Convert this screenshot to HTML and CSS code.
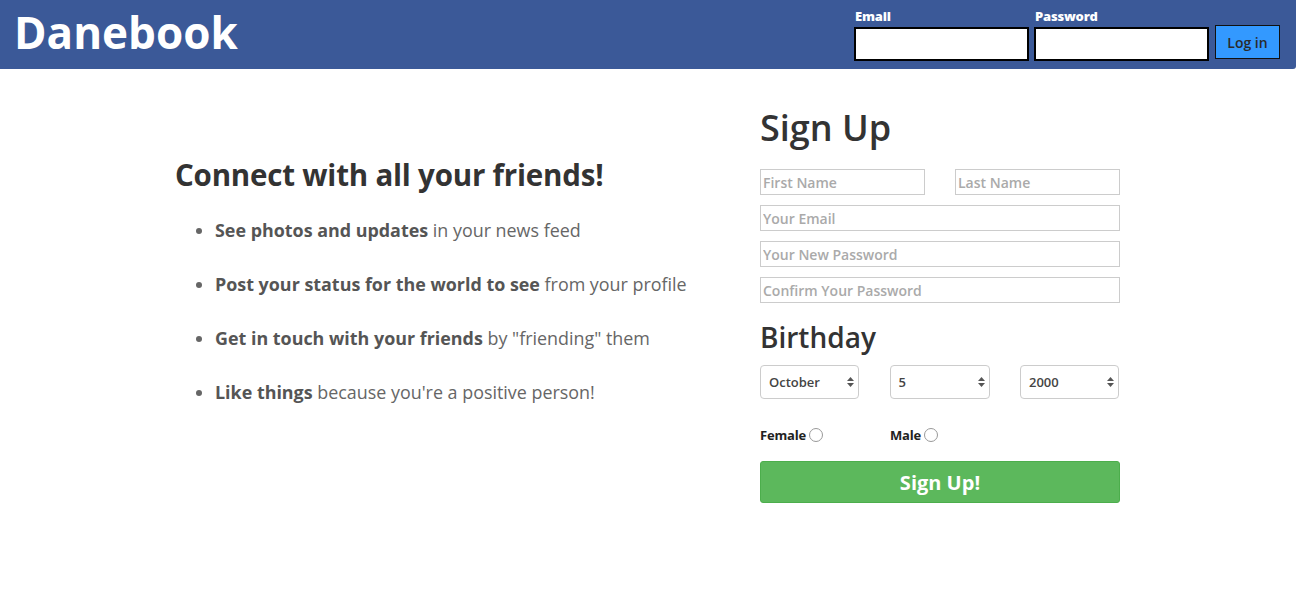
FILE: index.html
```html
<!DOCTYPE html>
<html>
<head>
<meta charset="utf-8">
<link rel="stylesheet" href="styles.css">
</head>
<body>
<header class="topbar">
  <div class="brand">Danebook</div>
  <form class="login">
    <div class="field">
      <label class="login-label">Email</label>
      <input class="login-input" type="text">
    </div>
    <div class="field">
      <label class="login-label">Password</label>
      <input class="login-input" type="password">
    </div>
    <button type="button" class="login-btn">Log in</button>
  </form>
</header>
<main class="main">
  <section class="pitch">
    <h2 class="pitch-title">Connect with all your friends!</h2>
    <ul class="pitch-list">
      <li><b>See photos and updates</b> in your news feed</li>
      <li><b>Post your status for the world to see</b> from your profile</li>
      <li><b>Get in touch with your friends</b> by "friending" them</li>
      <li><b>Like things</b> because you're a positive person!</li>
    </ul>
  </section>
  <section class="signup">
    <h1 class="signup-title">Sign Up</h1>
    <div class="row two">
      <input class="txt" placeholder="First Name">
      <input class="txt" placeholder="Last Name">
    </div>
    <input class="txt full" placeholder="Your Email">
    <input class="txt full" placeholder="Your New Password">
    <input class="txt full" placeholder="Confirm Your Password">
    <h2 class="bday-title">Birthday</h2>
    <div class="row three">
      <div class="sel"><span>October</span><svg width="7" height="12" viewBox="0 0 7 12"><path d="M3.5 1 L7 5 H0Z M3.5 11 L7 7 H0Z" fill="#555"/></svg></div>
      <div class="sel"><span>5</span><svg width="7" height="12" viewBox="0 0 7 12"><path d="M3.5 1 L7 5 H0Z M3.5 11 L7 7 H0Z" fill="#555"/></svg></div>
      <div class="sel"><span>2000</span><svg width="7" height="12" viewBox="0 0 7 12"><path d="M3.5 1 L7 5 H0Z M3.5 11 L7 7 H0Z" fill="#555"/></svg></div>
    </div>
    <div class="gender">
      <label class="g">Female <span class="radio"></span></label>
      <label class="g">Male <span class="radio"></span></label>
    </div>
    <button type="button" class="signup-btn">Sign Up!</button>
  </section>
</main>
</body>
</html>
```
FILE: styles.css
```css
* { box-sizing: border-box; }
body {
  margin: 0;
  font-family: "Open Sans", "Lato", sans-serif;
  background: #fff;
  width: 1296px;
}
.topbar {
  height: 69px;
  background: #3b5998;
  display: flex;
  justify-content: space-between;
  align-items: flex-start;
  padding: 0 16px 0 14px;
  border-bottom-right-radius: 3px;
}
.brand {
  color: #fff;
  font-weight: 700;
  font-size: 44px;
  line-height: 1;
  margin-top: 10px;
  letter-spacing: 0;
}
.login {
  display: flex;
  align-items: flex-start;
  gap: 5px;
  margin-top: 8px;
}
.field { display: flex; flex-direction: column; }
.login-label {
  color: #fff;
  font-weight: 800;
  font-size: 13px;
  line-height: 16px;
  height: 19px;
  padding-left: 1px;
  letter-spacing: -0.2px;
}
.login-input {
  width: 175px;
  height: 34px;
  border: 2px solid #000;
  background: #fff;
  margin: 0;
}
.login-btn {
  margin-top: 17px;
  margin-left: 1px;
  width: 65px;
  height: 34px;
  background: #3399ff;
  border: 1px solid #111;
  color: #2a2a2a;
  font-family: inherit;
  font-size: 14px;
  font-weight: 600;
  padding: 0;
}
.main {
  display: flex;
  padding-left: 175px;
}
.pitch { width: 585px; padding-top: 86px; }
.pitch-title {
  margin: 0;
  font-size: 29.5px;
  font-weight: 700;
  color: #333;
  line-height: 40px;
  letter-spacing: -0.2px;
}
.pitch-list {
  margin: 22px 0 0;
  padding-left: 40px;
  color: #666;
  font-size: 17.9px;
}
.pitch-list li {
  line-height: 26px;
  margin-bottom: 28px;
}
.pitch-list b { font-weight: 700; color: #555; }
.signup {
  width: 360px;
  padding-top: 35px;
  display: flex;
  flex-direction: column;
}
.signup-title {
  margin: 0;
  font-size: 36px;
  font-weight: 600;
  color: #333;
  line-height: 48px;
}
.row { display: flex; justify-content: space-between; }
.row.two { margin-top: 17px; }
.txt {
  height: 26px;
  border: 1px solid #ccc;
  font-family: inherit;
  font-size: 14px;
  font-weight: 600;
  padding: 0 2px;
  margin: 0;
}
.txt::placeholder { color: #aaa; }
.row.two .txt { width: 165px; }
.txt.full { width: 360px; margin-top: 10px; }
.bday-title {
  margin: 14px 0 0;
  font-size: 28px;
  font-weight: 600;
  color: #333;
  line-height: 40px;
}
.row.three { margin-top: 8px; padding-right: 1px; }
.sel {
  width: 99px;
  height: 34px;
  border: 1px solid #ccc;
  border-radius: 4px;
  display: flex;
  align-items: center;
  justify-content: space-between;
  padding: 0 4px 0 8px;
  font-size: 13px;
  font-weight: 600;
  color: #444;
}
.sel:nth-child(2) { width: 100px; }
.gender {
  display: flex;
  margin-top: 27px;
}
.g {
  width: 130px;
  font-size: 13px;
  font-weight: 700;
  color: #222;
  display: flex;
  align-items: center;
  gap: 3px;
  letter-spacing: -0.2px;
}
.radio {
  width: 14px;
  height: 14px;
  border: 1px solid #999;
  border-radius: 50%;
  display: inline-block;
}
.signup-btn {
  margin-top: 17px;
  height: 42px;
  width: 360px;
  background: #5cb85c;
  border: 1px solid #4cae4c;
  border-radius: 3px;
  color: #fff;
  font-family: inherit;
  font-size: 20px;
  font-weight: 700;
}
```
